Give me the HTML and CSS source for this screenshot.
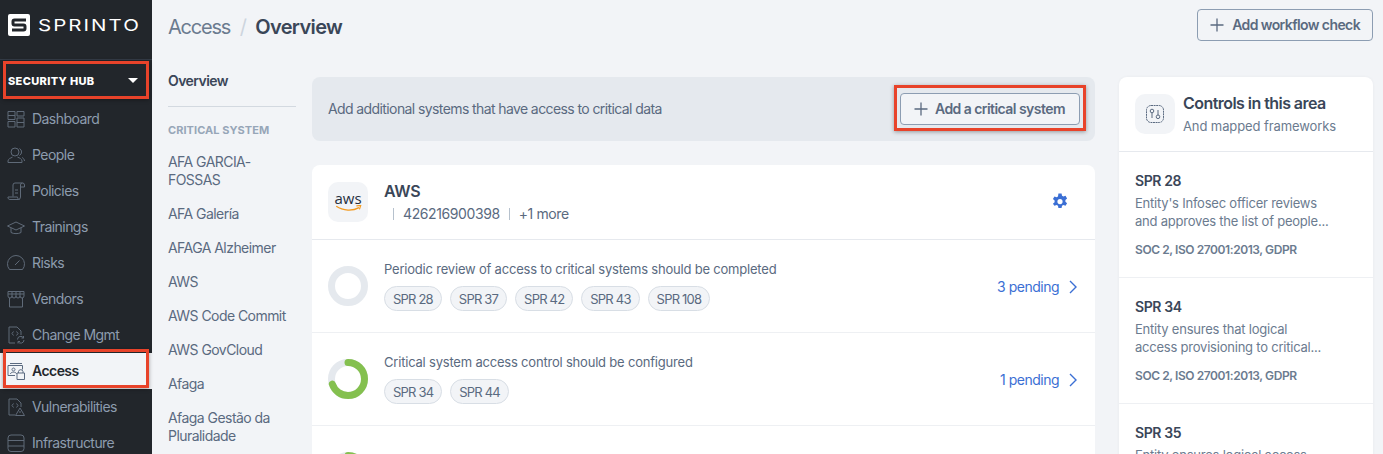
FILE: index.html
```html
<!DOCTYPE html>
<html lang="en">
<head>
<meta charset="utf-8">
<title>Sprinto - Access Overview</title>
<link rel="stylesheet" href="styles.css">
</head>
<body>
<div class="app">
  <aside class="sidebar">
    <div class="brand">
      <span class="brand-mark"><svg viewBox="0 0 22 22" width="22" height="22"><rect width="22" height="22" rx="2" fill="#fff"/><path d="M18 6H6.500A1.500 1.500 0 0 0 5 7.500v2A1.500 1.500 0 0 0 6.500 11h9a1.500 1.500 0 0 1 1.500 1.500v2a1.500 1.500 0 0 1-1.500 1.500H4" fill="none" stroke="#22262b" stroke-width="3"/></svg></span>
      <span class="brand-name">SPRINTO</span>
    </div>
    <div class="hub"><span>SECURITY HUB</span><i class="caret"></i></div>
    <nav class="nav">
      <a class="nav-item"><svg class="ni" viewBox="0 0 18 18"><path d="M1 1.500h7v8H1zM10 1.500h7v4.500h-7zM10 8h7v9h-7zM1 11.500h7V17H1zM1 5.500h7M10 12.500h7"/></svg>Dashboard</a>
      <a class="nav-item"><svg class="ni" viewBox="0 0 18 18"><circle cx="8" cy="6" r="4"/><path d="M1 16.500V15c0-2 2.500-3 4.500-3.800M10.500 11.200c2 .6 4.500 1.800 4.500 3.800v1.500H1M12.500 2.500a4 4 0 0 1 0 7M15 11.500c1.200.6 2.500 1.800 2.500 3.500"/></svg>People</a>
      <a class="nav-item"><svg class="ni" viewBox="0 0 18 18"><path d="M6 14.500V3a2 2 0 0 1 2-2h7.500M15.500 1a2 2 0 0 1 2 2v2h-4V3a2 2 0 0 1 2-2M13.500 5v10a2.500 2.500 0 0 1-2.500 2.500H3a2 2 0 0 1-2-2.500h9.500c0 1 .5 2.500 2 2.500M8 8h3M8 11h3"/></svg>Policies</a>
      <a class="nav-item"><svg class="ni" viewBox="0 0 18 18"><path d="M9 4 .5 8 9 12l8.500-4zM4 10v4.500c2.500 1.500 7.500 1.500 10 0V10"/></svg>Trainings</a>
      <a class="nav-item"><svg class="ni" viewBox="0 0 18 18"><path d="M2.500 15.500a8.500 8.500 0 1 1 13 0zM8 11l4.500-4.500"/></svg>Risks</a>
      <a class="nav-item"><svg class="ni" viewBox="0 0 18 18"><path d="M2.500 8v9h13V8M1 1.500h16V6a2 2 0 0 1-4 0 2 2 0 0 1-4 0 2 2 0 0 1-4 0 2 2 0 0 1-4 0zM5 1.500V6M9 1.500V6M13 1.500V6M1 4h16"/></svg>Vendors</a>
      <a class="nav-item"><svg class="ni" viewBox="0 0 18 18"><path d="M8 17H2V1h8l4 4v4M6.500 5.500 5 7.500l1.500 2M9.500 5.500l1.500 2-1.500 2M10.500 13.500a3.200 3.200 0 0 1 6-1.500M17 14a3.200 3.200 0 0 1-6 1.500M16.500 10v2h-2M11 17.500v-2h2"/></svg>Change Mgmt</a>
      <a class="nav-item is-active"><svg class="ni" viewBox="0 0 18 18"><path d="M3 1.500h12M1 3.500h14.500v4M8 13.500H1v-10M6.500 6a1.500 1.500 0 1 0 .01 0M3.500 12c0-2.500 6-2.500 6 0M11.500 11V9.500a2.300 2.300 0 0 1 4.500 0V11M10 11h7.500v6.500H10z"/></svg>Access</a>
      <a class="nav-item"><svg class="ni" viewBox="0 0 18 18"><path d="M8 17H2V1h8l4 4v4M6.500 5.500 5 7.500l1.500 2M9.500 5.500l1.500 2-1.500 2M13 10l4.500 7.500h-9zM13 13v2"/></svg>Vulnerabilities</a>
      <a class="nav-item"><svg class="ni" viewBox="0 0 18 18"><path d="M4 1h10a3 3 0 0 1 3 3v10.500a3 3 0 0 1-3 3H4a3 3 0 0 1-3-3V4a3 3 0 0 1 3-3zM1 6.500h16M1 12h16"/></svg>Infrastructure</a>
    </nav>
  </aside>

  <main class="main">
    <header class="topbar">
      <h1 class="crumbs"><span class="crumb">Access</span><span class="sep">/</span><span class="crumb-current">Overview</span></h1>
      <button class="btn"><svg class="plus" viewBox="0 0 14 14"><path d="M7 .5v13M.5 7h13"/></svg>Add workflow check</button>
    </header>

    <div class="columns">
      <nav class="subnav">
        <div class="sub-head">Overview</div>
        <div class="sub-label">CRITICAL SYSTEM</div>
        <a class="sub-item">AFA GARCIA-<br>FOSSAS</a>
        <a class="sub-item">AFA Galería</a>
        <a class="sub-item">AFAGA Alzheimer</a>
        <a class="sub-item">AWS</a>
        <a class="sub-item">AWS Code Commit</a>
        <a class="sub-item">AWS GovCloud</a>
        <a class="sub-item">Afaga</a>
        <a class="sub-item">Afaga Gestão da<br>Pluralidade</a>
      </nav>

      <section class="center">
        <div class="banner">
          <span class="banner-text">Add additional systems that have access to critical data</span>
          <button class="btn"><svg class="plus" viewBox="0 0 14 14"><path d="M7 .5v13M.5 7h13"/></svg>Add a critical system</button>
        </div>

        <div class="card">
          <div class="card-head">
            <span class="tile"><span class="aws-word">aws</span><svg class="aws-smile" viewBox="0 0 30 8" width="29" height="7"><path d="M1 1.500c8 5.500 19 5.500 26 1.500" fill="none" stroke="#f39a1f" stroke-width="1.500"/><path d="m24 1 5-.5-1.500 4.500" fill="none" stroke="#f39a1f" stroke-width="1.300"/></svg></span>
            <div class="head-text">
              <div class="sys-name">AWS</div>
              <div class="sys-meta"><span class="bar"></span>426216900398<span class="bar"></span>+1 more</div>
            </div>
            <svg class="gear" viewBox="0 0 16 16" width="18" height="18"><path fill="#3b6fd4" fill-rule="evenodd" d="M6.600.5h2.800l.4 2 1.200.7 1.900-.7 1.400 2.400-1.500 1.300v1.500l1.500 1.300-1.400 2.400-1.900-.7-1.200.7-.4 2H6.600l-.4-2-1.200-.7-1.900.7L1.700 9.500l1.500-1.300V6.700L1.700 5.400l1.400-2.400 1.900.7 1.200-.7zM8 5.300a2.300 2.300 0 1 0 0 4.600 2.300 2.300 0 0 0 0-4.600z"/></svg>
          </div>

          <div class="check">
            <svg class="ring" viewBox="0 0 40 40"><circle class="ring-bg" cx="20" cy="20" r="16.500"/></svg>
            <div class="check-body">
              <div class="check-title">Periodic review of access to critical systems should be completed</div>
              <div class="tags"><span class="tag">SPR 28</span><span class="tag">SPR 37</span><span class="tag">SPR 42</span><span class="tag">SPR 43</span><span class="tag">SPR 108</span></div>
            </div>
            <a class="pending">3 pending<svg class="chev" viewBox="0 0 8 14"><path d="m1 1 6 6-6 6"/></svg></a>
          </div>

          <div class="check">
            <svg class="ring" viewBox="0 0 40 40"><circle class="ring-bg" cx="20" cy="20" r="16.500"/><circle class="ring-fg" cx="20" cy="20" r="16.500" pathLength="100" stroke-dasharray="70 100" transform="rotate(-90 20 20)"/></svg>
            <div class="check-body">
              <div class="check-title">Critical system access control should be configured</div>
              <div class="tags"><span class="tag">SPR 34</span><span class="tag">SPR 44</span></div>
            </div>
            <a class="pending">1 pending<svg class="chev" viewBox="0 0 8 14"><path d="m1 1 6 6-6 6"/></svg></a>
          </div>

          <div class="check check-last">
            <svg class="ring" viewBox="0 0 40 40"><circle class="ring-bg" cx="20" cy="20" r="16.500"/><circle class="ring-fg" cx="20" cy="20" r="16.500" pathLength="100" stroke-dasharray="70 100" transform="rotate(-90 20 20)"/></svg>
            <div class="check-body">
              <div class="check-title">Users should be identified</div>
            </div>
          </div>
        </div>
      </section>

      <aside class="controls">
        <div class="ctl-head">
          <span class="tile"><svg viewBox="0 0 20 20" width="20" height="20" class="ctl-icon"><rect x="1.500" y="1.500" width="17" height="17" rx="4.500" stroke-dasharray="2 .6"/><circle cx="7" cy="7" r="1.800"/><path d="M7 8.800V14M13 6v5"/><circle cx="13" cy="12.800" r="1.800"/></svg></span>
          <div class="ctl-head-text">
            <div class="ctl-title">Controls in this area</div>
            <div class="ctl-sub">And mapped frameworks</div>
          </div>
        </div>
        <div class="ctl-item">
          <div class="ctl-id">SPR 28</div>
          <div class="ctl-desc">Entity's Infosec officer reviews<br>and approves the list of people...</div>
          <div class="ctl-fw">SOC 2, ISO 27001:2013, GDPR</div>
        </div>
        <div class="ctl-item">
          <div class="ctl-id">SPR 34</div>
          <div class="ctl-desc">Entity ensures that logical<br>access provisioning to critical...</div>
          <div class="ctl-fw">SOC 2, ISO 27001:2013, GDPR</div>
        </div>
        <div class="ctl-item">
          <div class="ctl-id">SPR 35</div>
          <div class="ctl-desc">Entity ensures logical access</div>
        </div>
      </aside>
    </div>
  </main>
</div>
<div class="mark mark-hub"></div>
<div class="mark mark-access"></div>
<div class="mark mark-add"></div>
</body>
</html>
```

FILE: styles.css
```css
* { box-sizing: border-box; }
html, body { margin: 0; height: 454px; overflow: hidden; }
body { font-family: Inter, "Liberation Sans", sans-serif; font-size: 14px; line-height: 18px; letter-spacing: -0.55px; color: #5a6a80; background: #f2f4f7; position: relative; }
.app { display: flex; height: 454px; overflow: hidden; }

.sidebar { width: 152px; flex: none; background: #22262b; color: #8d9cae; }
.brand { height: 60px; display: flex; align-items: center; padding: 0 0 10px 8px; gap: 8px; border-bottom: 1px solid #333b46; }
.brand-mark { display: flex; }
.brand-name { font-size: 16px; font-weight: 400; letter-spacing: 1.600px; color: #fff; transform: scaleX(1.28); transform-origin: left center; }
.hub { height: 41px; display: flex; align-items: center; justify-content: space-between; padding: 0 14px 0 8px; font-size: 11px; font-weight: 800; letter-spacing: 0.35px; color: #fff; }
.caret { width: 0; height: 0; border-left: 5px solid transparent; border-right: 5px solid transparent; border-top: 5px solid #fff; }
.nav-item { height: 36px; display: flex; align-items: center; gap: 7px; padding-left: 7px; color: #8d9cae; }
.ni { width: 18px; height: 18px; flex: none; fill: none; stroke: #5f6a78; stroke-width: 1; }
.nav-item.is-active { background: #f2f4f7; color: #23272d; font-weight: 600; }
.is-active .ni { stroke: #5a6a80; }

.main { flex: 1; min-width: 0; padding: 0 10px 0 16px; }
.topbar { height: 77px; display: flex; justify-content: space-between; align-items: flex-start; }
.crumbs { margin: 0; height: 53px; display: flex; align-items: center; font-size: 20px; font-weight: 400; letter-spacing: -1.2px; color: #6b7b8f; }
.sep { margin: 0 9.500px; color: #cdd5de; }
.crumb-current { font-weight: 600; color: #3a4658; letter-spacing: -0.65px; }
.btn { display: inline-flex; align-items: center; gap: 8px; height: 32px; padding: 0 12px 0 12px; margin-top: 9px; white-space: nowrap; background-color: transparent; border: 1px solid #8c9db2; border-radius: 4px; font: 600 14px/18px Inter, "Liberation Sans", sans-serif; letter-spacing: -0.6px; color: #5a6a80; }
.plus { width: 14px; height: 14px; flex: none; fill: none; stroke: #5a6a80; stroke-width: 1.300; }

.columns { display: flex; align-items: flex-start; }
.subnav { width: 128px; flex: none; margin-right: 16px; }
.sub-head { height: 30px; border-bottom: 1px solid #d3d9e0; font-weight: 600; color: #3a4658; line-height: 8px; }
.sub-label { margin-top: 17px; margin-bottom: 17px; font-size: 11px; line-height: 12px; font-weight: 700; letter-spacing: 0.05px; color: #97a6b8; }
.sub-item { display: block; margin-bottom: 16px; }

.center { width: 783px; flex: none; margin-right: 24px; }
.banner { height: 64px; display: flex; align-items: center; justify-content: space-between; padding: 0 15px 0 16px; margin-bottom: 24px; background: #e5e9ee; border-radius: 8px; }
.banner-text { letter-spacing: -0.6px; }
.banner .btn { margin-top: 0; height: 32px; width: 180px; background: #f2f4f7; padding-left: 13px; gap: 7px; letter-spacing: -0.55px; }
.card { background: #fff; border-radius: 8px 8px 0 0; height: 400px; }
.card-head { height: 75px; display: flex; align-items: center; padding: 0 26px 0 16px; border-bottom: 1px solid #e6e9ee; }
.tile { width: 40px; height: 40px; flex: none; background: #f2f4f7; border-radius: 10px; display: flex; flex-direction: column; align-items: center; justify-content: center; }
.aws-word { font: 400 15px/11px "Open Sans", sans-serif; letter-spacing: 0; color: #252f3e; }
.aws-smile { margin-top: 1px; }
.head-text { flex: 1; margin-left: 16px; }
.sys-name { font-size: 16px; line-height: 22px; font-weight: 600; color: #3a4658; margin-top: -2px; letter-spacing: -0.3px; }
.sys-meta { display: flex; align-items: center; margin-top: 3px; letter-spacing: -0.4px; }
.bar { width: 1px; height: 12px; background: #b6c1cd; margin: 0 9px; }

.check { height: 93px; display: flex; align-items: center; padding: 0 17px 0 16px; border-bottom: 1px solid #eef0f3; }
.check-last { align-items: flex-start; padding-top: 26px; border-bottom: 0; }
.ring { width: 40px; height: 40px; flex: none; }
.ring circle { fill: none; stroke-width: 7; }
.ring-bg { stroke: #e5e9ee; }
.ring-fg { stroke: #84c04f; stroke-linecap: round; }
.check-body { flex: 1; margin-left: 16px; padding-top: 1px; }
.check-title { color: #5a6a80; font-size: 13px; letter-spacing: -0.2px; margin-top: -2px; }
.tags { display: flex; gap: 8px; margin-top: 8px; }
.tag { height: 25px; padding: 0 8px; display: flex; align-items: center; background: #f2f4f7; border: 1px solid #d8dee5; border-radius: 13px; font-size: 13px; letter-spacing: -0.8px; color: #5a6a80; }
.pending { display: flex; align-items: center; gap: 10px; color: #3b6fd4; font-size: 14px; letter-spacing: -0.5px; padding-top: 1px; margin-right: 1px; }
.chev { width: 8px; height: 14px; fill: none; stroke: #3b6fd4; stroke-width: 1.400; }

.controls { width: 254px; flex: none; background: #fff; border-radius: 8px 8px 0 0; height: 400px; box-shadow: 0 0 3px rgba(60,70,90,.06); }
.ctl-head { height: 75px; display: flex; align-items: center; gap: 8px; padding: 0 16px; border-bottom: 1px solid #e6e9ee; }
.ctl-head-text { padding-top: 2px; }
.ctl-icon { fill: none; stroke: #5a6a80; stroke-width: 1; }
.ctl-title { font-size: 16px; line-height: 22px; font-weight: 600; color: #3a4658; letter-spacing: -0.55px; }
.ctl-sub { font-size: 13px; line-height: 24px; letter-spacing: -0.1px; color: #6b7b8f; }
.ctl-item { height: 126px; padding: 20px 16px 0; border-bottom: 1px solid #eef0f3; }
.ctl-id { font-size: 14px; line-height: 18px; font-weight: 600; color: #3a4658; letter-spacing: -0.4px; }
.ctl-desc { margin-top: 4px; font-size: 13px; line-height: 18px; letter-spacing: -0.22px; color: #6b7b8f; }
.ctl-fw { margin-top: 12px; font-size: 12px; line-height: 16px; font-weight: 600; letter-spacing: -0.42px; color: #6b7b8f; }

.mark { position: absolute; border: 3px solid #e8432a; box-shadow: 0 1px 4px rgba(0,0,0,.35); pointer-events: none; }
.mark-hub { left: 3px; top: 61px; width: 146px; height: 38px; }
.mark-access { left: 3px; top: 349px; width: 146px; height: 39px; }
.mark-add { left: 894px; top: 85px; width: 192px; height: 46px; }
```
